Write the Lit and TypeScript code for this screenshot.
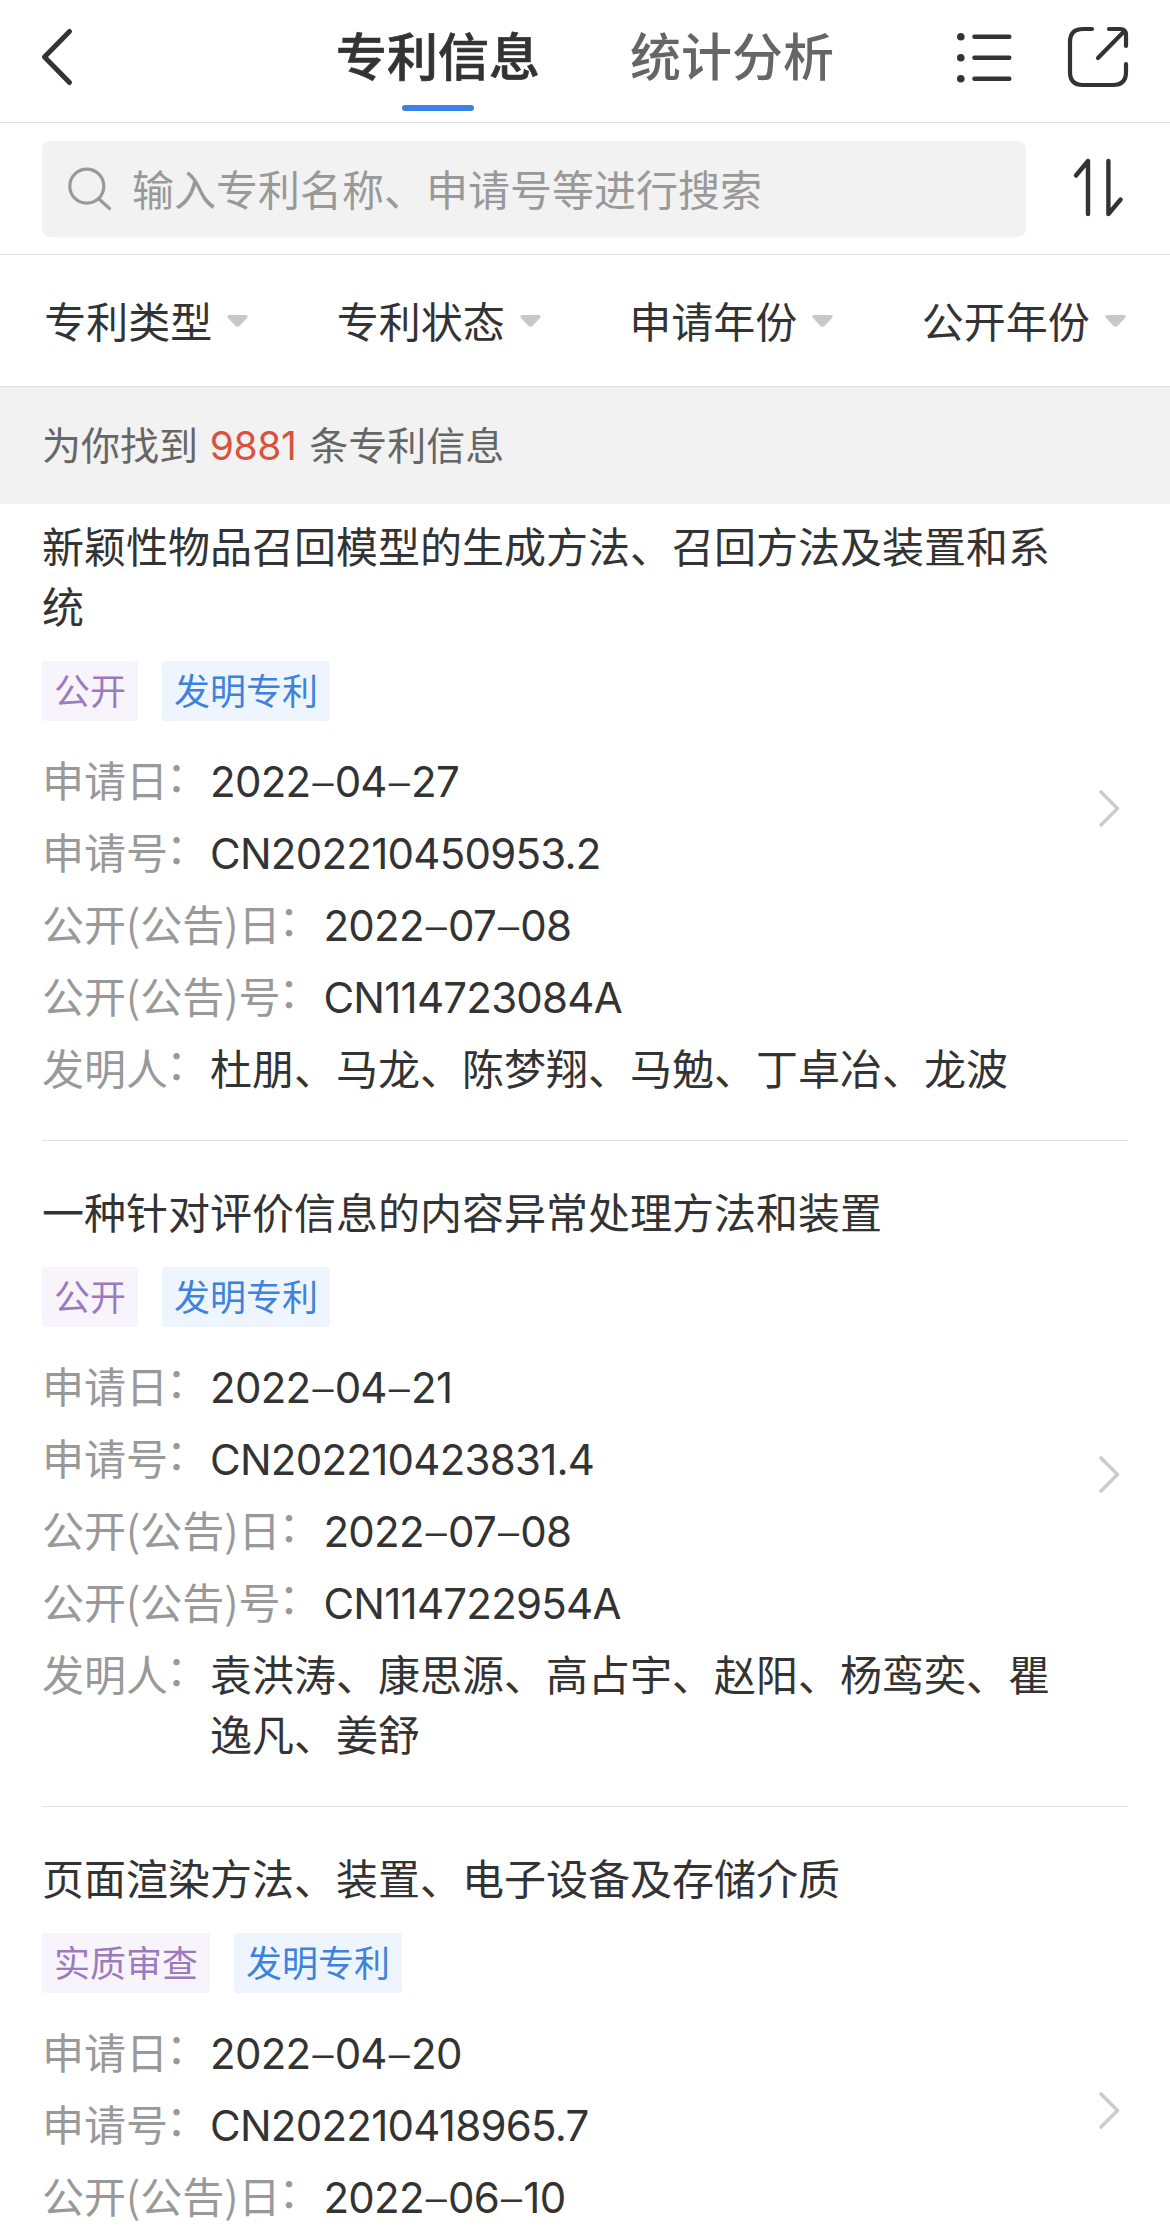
import { LitElement, html, css } from "lit";
import { customElement, property } from "lit/decorators.js";

interface Field {
  label: string;
  value: string;
  latin?: boolean;
}

interface Patent {
  title: string;
  status: string;
  kind: string;
  fields: Field[];
}

const FILTERS = ["专利类型", "专利状态", "申请年份", "公开年份"];

const PATENTS: Patent[] = [
  {
    title: "新颖性物品召回模型的生成方法、召回方法及装置和系统",
    status: "公开",
    kind: "发明专利",
    fields: [
      { label: "申请日", value: "2022–04–27", latin: true },
      { label: "申请号", value: "CN202210450953.2", latin: true },
      { label: "公开(公告)日", value: "2022–07–08", latin: true },
      { label: "公开(公告)号", value: "CN114723084A", latin: true },
      { label: "发明人", value: "杜朋、马龙、陈梦翔、马勉、丁卓冶、龙波" },
    ],
  },
  {
    title: "一种针对评价信息的内容异常处理方法和装置",
    status: "公开",
    kind: "发明专利",
    fields: [
      { label: "申请日", value: "2022–04–21", latin: true },
      { label: "申请号", value: "CN202210423831.4", latin: true },
      { label: "公开(公告)日", value: "2022–07–08", latin: true },
      { label: "公开(公告)号", value: "CN114722954A", latin: true },
      { label: "发明人", value: "袁洪涛、康思源、高占宇、赵阳、杨鸾奕、瞿逸凡、姜舒" },
    ],
  },
  {
    title: "页面渲染方法、装置、电子设备及存储介质",
    status: "实质审查",
    kind: "发明专利",
    fields: [
      { label: "申请日", value: "2022–04–20", latin: true },
      { label: "申请号", value: "CN202210418965.7", latin: true },
      { label: "公开(公告)日", value: "2022–06–10", latin: true },
    ],
  },
];

@customElement("patent-item")
export class PatentItem extends LitElement {
  @property({ attribute: false }) patent!: Patent;

  static styles = css`
    :host {
      display: block;
      padding: 0 42px;
    }
    .item {
      box-sizing: border-box;
      min-height: 606px;
      display: flex;
      justify-content: space-between;
      padding: 40px 0 41px;
      border-bottom: 1px solid #e0e0e0;
    }
    .body {
      width: 1010px;
    }
    .title {
      margin: 0;
      font-size: 42px;
      line-height: 60px;
      font-weight: 400;
      color: #333;
    }
    .tags {
      display: flex;
      gap: 24px;
      margin: 26px 0 30px;
    }
    .tag {
      padding: 0 12px;
      font-size: 36px;
      line-height: 57px;
      height: 60px;
      border-radius: 3px;
    }
    .status {
      color: #9d7abf;
      background: #f7f5fb;
    }
    .kind {
      color: #3d82dc;
      background: #eef5fe;
    }
    .fields {
      display: flex;
      flex-direction: column;
      gap: 12px;
    }
    .field {
      display: flex;
      font-size: 42px;
      line-height: 60px;
    }
    .label {
      flex: none;
      margin: -2px 0 2px;
      color: #999;
    }
    .wide {
      padding-right: 1px;
    }
    .colon {
      display: inline-block;
      transform: translate(-2px, -5px);
    }
    .value {
      margin: -2px 0 2px;
      color: #333;
    }
    .latin {
      margin: 1px 0 -1px;
      font-family: Inter, "Noto Sans CJK SC", sans-serif;
      font-weight: 370;
      font-feature-settings: "calt" 0;
      letter-spacing: -0.75px;
      white-space: nowrap;
    }
    .dash {
      display: inline-block;
      padding: 0 2px;
      font-weight: 300;
      transform: translateY(1px);
    }
    .chevron {
      flex: none;
      align-self: center;
      width: 30px;
      height: 40px;
      margin-top: 2px;
    }
  `;

  private renderValue(f: Field) {
    if (!f.latin) return f.value;
    return f.value
      .split("–")
      .map((part, i) => (i ? html`<span class="dash">–</span>${part}` : part));
  }

  render() {
    const p = this.patent;
    return html`
      <article class="item">
        <div class="body">
          <h2 class="title">${p.title}</h2>
          <div class="tags">
            <span class="tag status">${p.status}</span>
            <span class="tag kind">${p.kind}</span>
          </div>
          <div class="fields">
            ${p.fields.map(
              (f) => html`<div class="field">
                <span class="label ${f.label.length > 4 ? "wide" : ""}">${f.label}<span class="colon">：</span></span>
                <span class="value ${f.latin ? "latin" : ""}">${this.renderValue(f)}</span>
              </div>`
            )}
          </div>
        </div>
        <svg class="chevron" viewBox="0 0 30 40" fill="none" stroke="#ccc" stroke-width="3.6" stroke-linecap="round" stroke-linejoin="round">
          <path d="M3 4 L19.5 20.5 L3 37" />
        </svg>
      </article>
    `;
  }
}

@customElement("app-root")
export class AppRoot extends LitElement {
  static styles = css`
    :host {
      display: block;
      width: 1170px;
      height: 2235px;
      overflow: hidden;
      background: #fff;
      color: #333;
      font-family: "Noto Sans CJK SC", sans-serif;
    }
    .header {
      box-sizing: border-box;
      height: 123px;
      display: grid;
      grid-template-columns: 336px 1fr 336px;
      border-bottom: 1px solid #e0e0e0;
    }
    .back {
      width: 40px;
      height: 122px;
      margin-left: 38px;
    }
    .tabs {
      display: flex;
      gap: 90px;
    }
    .tab {
      display: flex;
      flex-direction: column;
      align-items: center;
      width: 204px;
      font-size: 51px;
      line-height: 76px;
      padding-top: 16px;
      color: #666;
      font-weight: 500;
      white-space: nowrap;
    }
    .active {
      color: #333;
      -webkit-text-stroke: 0.7px #333;
    }
    .bar {
      width: 72px;
      height: 6px;
      margin-top: 13px;
      border-radius: 3px;
      background: #3d82e6;
    }
    .actions {
      display: flex;
      justify-content: flex-end;
      gap: 50px;
      padding-right: 38px;
    }
    .actions .list {
      width: 60px;
      height: 122px;
    }
    .actions .share {
      width: 68px;
      height: 122px;
    }
    .search-row {
      box-sizing: border-box;
      height: 132px;
      display: flex;
      align-items: flex-start;
      padding: 18px 42px 0;
      border-bottom: 1px solid #e0e0e0;
    }
    .search {
      box-sizing: border-box;
      width: 984px;
      height: 96px;
      display: flex;
      align-items: center;
      border-radius: 8px;
      background: #f2f2f2;
      color: #999;
      font-size: 42px;
      line-height: 60px;
    }
    .placeholder {
      padding-bottom: 3px;
    }
    .glass {
      width: 50px;
      height: 50px;
      margin: 0 18px 0 22px;
    }
    .sort {
      width: 60px;
      height: 66px;
      margin: 14px 0 0 42px;
    }
    .filters {
      box-sizing: border-box;
      height: 132px;
      display: grid;
      grid-template-columns: repeat(4, 1fr);
      border-bottom: 1px solid #e0e0e0;
    }
    .filter {
      display: flex;
      align-items: center;
      justify-content: center;
      gap: 15px;
      font-size: 42px;
      line-height: 60px;
    }
    .name {
      padding-bottom: 1px;
    }
    .arrow {
      width: 21px;
      height: 12px;
    }
    .count {
      box-sizing: border-box;
      position: relative;
      z-index: 1;
      height: 117px;
      padding: 26px 42px;
      background: #f2f2f2;
      color: #666;
      font-size: 39px;
      line-height: 60px;
    }
    .number {
      margin: 0 4px 0 3px;
      color: #d9523f;
      font-family: Inter, "Noto Sans CJK SC", sans-serif;
      font-weight: 370;
      letter-spacing: -0.4px;
    }
    .results {
      margin-top: -29px;
    }
  `;

  render() {
    return html`
      <header class="header">
        <svg class="back" viewBox="0 0 40 122" fill="none" stroke="#333" stroke-width="5" stroke-linecap="round" stroke-linejoin="round">
          <path d="M31.5 31.5 L6.5 57 L31.5 82.5" />
        </svg>
        <nav class="tabs">
          <div class="tab active">专利信息<span class="bar"></span></div>
          <div class="tab">统计分析</div>
        </nav>
        <div class="actions">
          <svg class="list" viewBox="954 0 60 122" fill="none" stroke="#333" stroke-width="4.4" stroke-linecap="round">
            <path d="M974.4 36.7H1009.3M974.4 57.7H1009.3M974.4 78.8H1009.3" />
            <g fill="#333" stroke="none">
              <circle cx="960.8" cy="36.7" r="3.8" />
              <circle cx="960.8" cy="57.7" r="3.8" />
              <circle cx="960.8" cy="78.8" r="3.8" />
            </g>
          </svg>
          <svg class="share" viewBox="1064 0 68 122" fill="none" stroke="#333" stroke-width="4.2" stroke-linecap="round" stroke-linejoin="round">
            <path d="M1092 29H1083Q1070 29 1070 42V72Q1070 85 1083 85H1113Q1126 85 1126 72V64" />
            <path d="M1109 29H1120Q1126 29 1126 35V46" />
            <path d="M1098 58 L1124 31.5" />
          </svg>
        </div>
      </header>
      <div class="search-row">
        <div class="search">
          <svg class="glass" viewBox="64 162 50 50" fill="none" stroke="#999" stroke-width="3.2" stroke-linecap="round">
            <circle cx="86.8" cy="184.2" r="17" />
            <path d="M99 197 L109.5 206.5" />
          </svg>
          <span class="placeholder">输入专利名称、申请号等进行搜索</span>
        </div>
        <svg class="sort" viewBox="1068 155 60 66" fill="none" stroke="#333" stroke-width="4.4" stroke-linecap="round" stroke-linejoin="round">
          <path d="M1088 214V161L1076 175.5" />
          <path d="M1108.4 161V214L1120.6 199.5" />
        </svg>
      </div>
      <div class="filters">
        ${FILTERS.map(
          (name) => html`<div class="filter">
            <span class="name">${name}</span>
            <svg class="arrow" viewBox="0 0 21 12">
              <path d="M2 0H19Q22 0.6 20 3L13 10.6Q10.5 13 8 10.6L1 3Q-1 0.6 2 0Z" fill="#c8c8c8" />
            </svg>
          </div>`
        )}
      </div>
      <div class="count">为你找到 <span class="number">9881</span> 条专利信息</div>
      <main class="results">
        ${PATENTS.map((p) => html`<patent-item .patent=${p}></patent-item>`)}
      </main>
    `;
  }
}
